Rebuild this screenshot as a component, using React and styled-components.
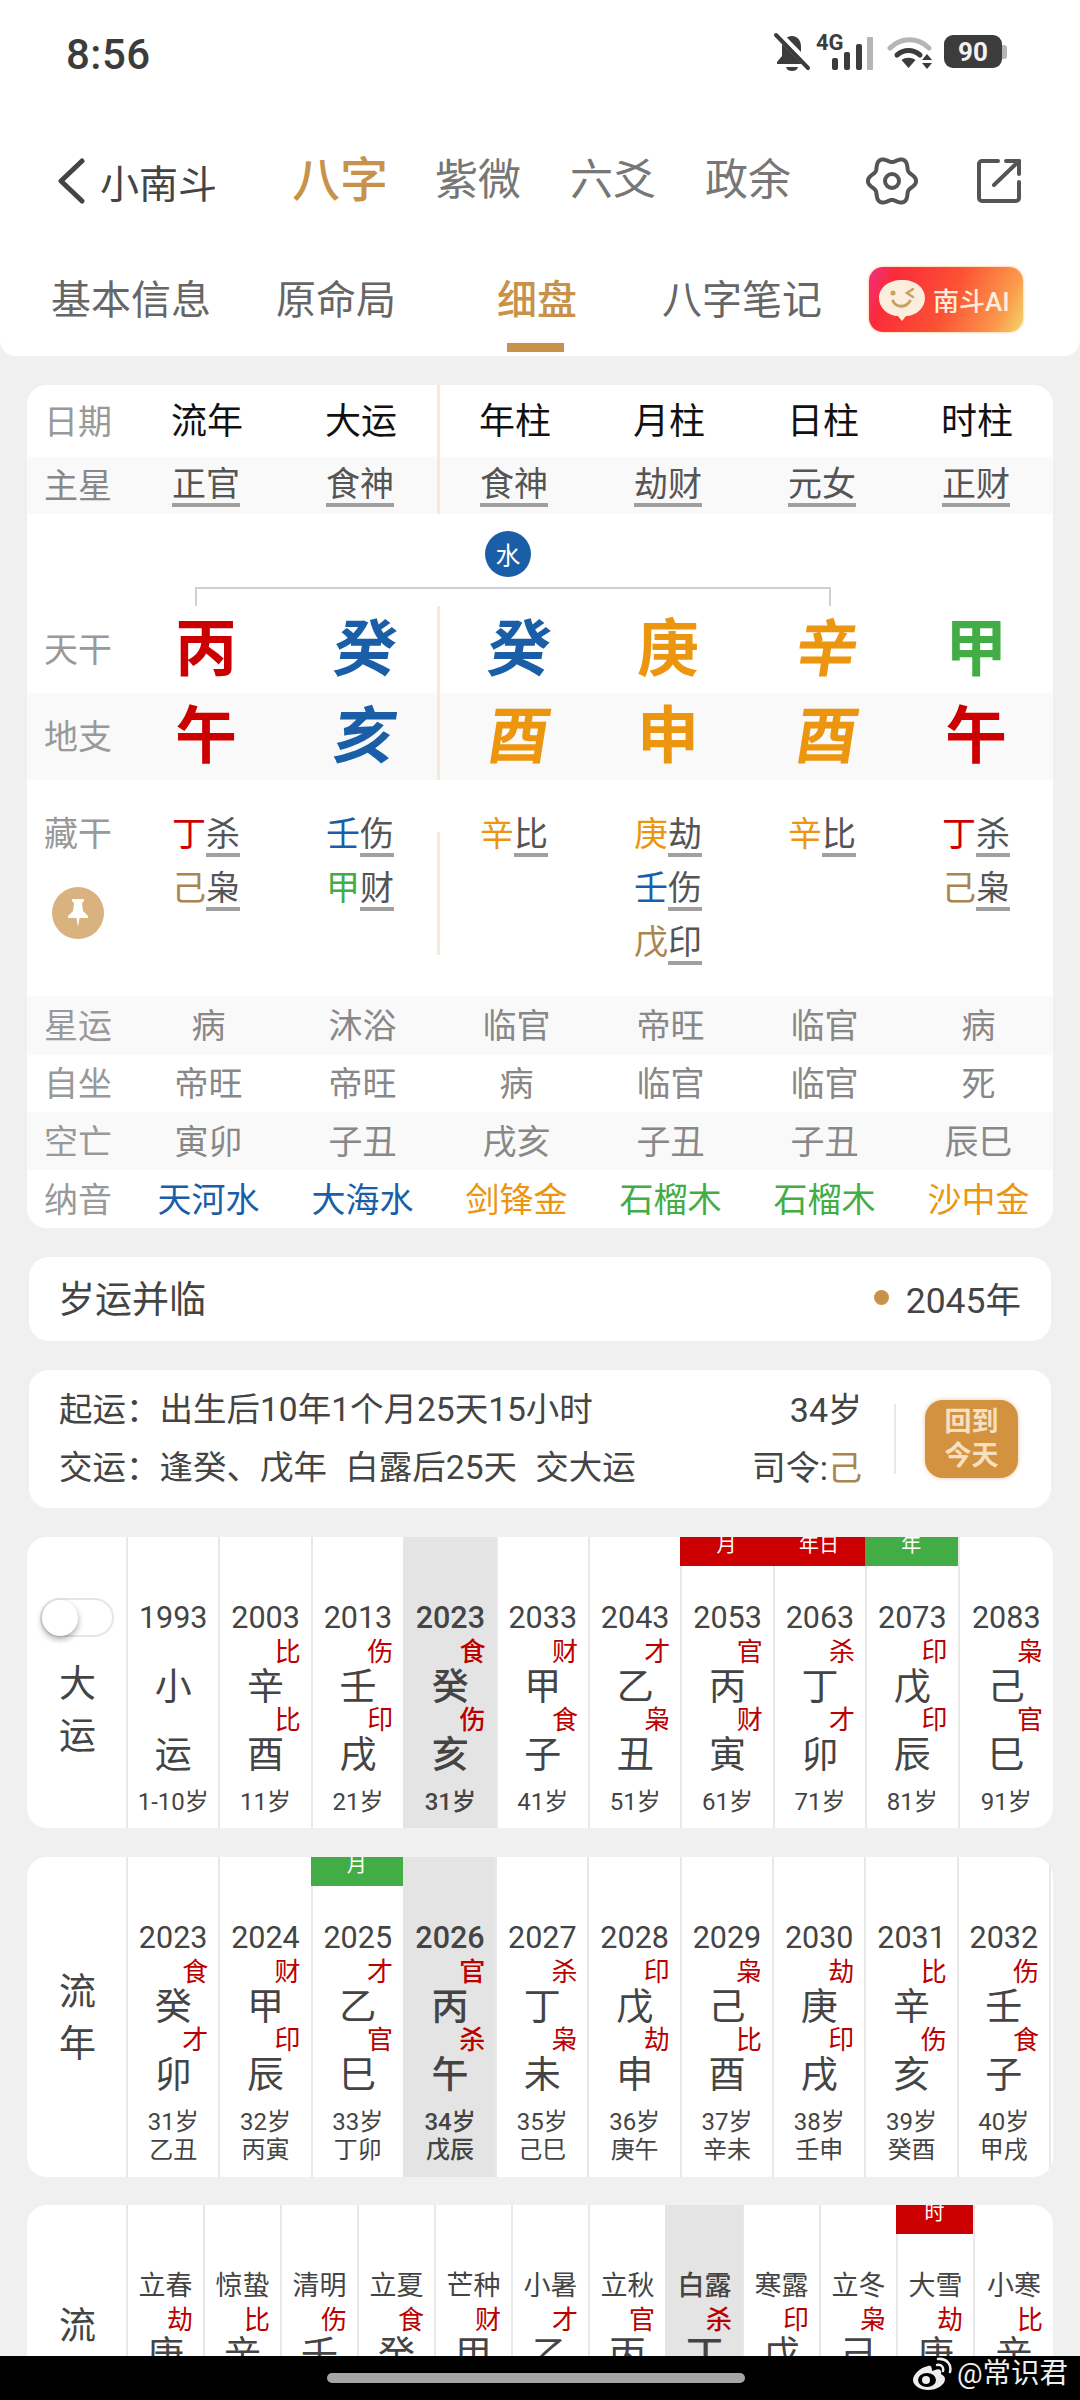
import React from 'react';
import styled, { createGlobalStyle } from 'styled-components';

const GlobalStyle = createGlobalStyle`
  html, body {
    margin: 0;
    padding: 0;
    background: #f0f0f0;
  }
  * {
    box-sizing: border-box;
  }
`

const RED = '#cc0000'
const BLUE = '#1a5ea8'
const ORANGE = '#ec960f'
const GREEN = '#43ad45'
const EARTH = '#a9854f'
const GOLD = '#c8924b'

const Page = styled.div`
  width: 1080px;
  height: 2400px;
  display: flex;
  flex-direction: column;
  overflow: hidden;
  font-family: Roboto, "Noto Sans CJK SC", sans-serif;
  background: #f0f0f0;
`

const Scroll = styled.div`
  height: 2356px;
  overflow: hidden;
  flex: none;
`

const Header = styled.div`
  height: 356px;
  background: #fff;
  border-radius: 0 0 16px 16px;
  display: flex;
  flex-direction: column;
`

const StatusBar = styled.div`
  height: 110px;
  flex: none;
  display: flex;
  align-items: center;
  justify-content: space-between;
  padding: 0 73px 2px 66px;
  color: #3c3c3c;
`

const Time = styled.div`
  font-size: 42px;
  font-weight: 500;
  letter-spacing: 0.5px;
`

const StatusIcons = styled.div`
  display: flex;
  align-items: center;
  margin-bottom: 5px;
`

const Battery = styled.div`
  width: 58px;
  height: 33px;
  margin-left: 11px;
  border-radius: 9px;
  background: #3c3c3c;
  color: #f2f2f2;
  font-size: 26px;
  font-weight: 700;
  display: flex;
  align-items: center;
  justify-content: center;
`

const BatteryCap = styled.div`
  width: 5px;
  height: 14px;
  background: #b5b5b5;
  border-radius: 0 3px 3px 0;
`

const NavRow = styled.div`
  height: 72px;
  flex: none;
  margin-top: 35px;
  display: flex;
  align-items: center;
  padding-left: 56px;
`

const BackLabel = styled.div`
  font-size: 39px;
  color: #444;
  margin-left: 14px;
  width: 192px;
`

const NavItem = styled.div`
  font-size: ${p => (p.$active ? 48 : 43)}px;
  color: ${p => (p.$active ? GOLD : '#777')};
  font-weight: ${p => (p.$active ? 500 : 400)};
  margin-right: ${p => (p.$active ? 47 : 49)}px;
  line-height: 1.2;
`

const NavIcons = styled.div`
  display: flex;
  align-items: center;
  margin-left: 26px;
  gap: 58px;
`

const TabRow = styled.div`
  flex: 1;
  display: flex;
  align-items: flex-start;
  padding-top: 60px;
`

const Tab = styled.div`
  font-size: 40px;
  line-height: 48px;
  color: ${p => (p.$active ? GOLD : '#666')};
  font-weight: ${p => (p.$active ? 500 : 400)};
  margin-left: ${p => p.$left}px;
  position: relative;
  flex: none;
`

const TabBar = styled.div`
  position: absolute;
  left: 10px;
  top: 66px;
  width: 57px;
  height: 9px;
  background: ${GOLD};
`

const AiBadge = styled.div`
  margin-left: 47px;
  margin-top: -10px;
  width: 154px;
  height: 65px;
  border-radius: 14px;
  background: linear-gradient(115deg, #ee2f86 0%, #fb2b3a 16%, #fb5234 52%, #fb9a4c 84%, #f3d768 100%);
  box-shadow: 0 0 2px 1px #ffdcb4;
  display: flex;
  align-items: center;
  padding-left: 9px;
  color: #ffeede;
  font-size: 26px;
  font-weight: 500;
  flex: none;
`

const AiFace = styled.svg`
  margin-right: 7px;
  flex: none;
`

const Card = styled.div`
  margin: ${p => p.$top}px 27px 0;
  background: #fff;
  border-radius: 20px;
  overflow: hidden;
`

const Row = styled.div`
  display: grid;
  grid-template-columns: 102px repeat(6, 154px);
  grid-auto-rows: ${p => p.$h}px;
  height: ${p => p.$h}px;
  background: ${p => (p.$shade ? '#f9f9f9' : '#fff')};
`

const Cell = styled.div`
  display: flex;
  align-items: center;
  justify-content: center;
  font-size: ${p => p.$size || 34}px;
  line-height: 1.2;
  color: ${p => p.$color || '#777'};
  font-weight: ${p => p.$weight || 400};
  padding-top: ${p => p.$drop || 0}px;
  padding-left: ${p => p.$nudge || 0}px;
  ${p => (p.$divide ? 'border-left: 3px solid #f6e8da; padding-right: 3px;' : '')}
`

const Label = styled(Cell)`
  color: ${p => p.$color || '#999'};
  justify-content: flex-start;
  padding-left: 17px;
  padding-top: 2px;
`

const Star = styled.span`
  color: #555;
  border-bottom: 4px solid #a0a0a0;
  line-height: 38px;
  display: inline-block;
`

const BigChar = styled.span`
  display: inline-block;
  ${p => (p.$skew ? 'transform: translateX(5px) skewX(-9deg);' : '')}
`

const WaterArea = styled.div`
  height: 92px;
  display: flex;
  flex-direction: column;
  align-items: center;
  padding-top: 17px;
`

const WaterDot = styled.div`
  width: 46px;
  height: 46px;
  flex: none;
  border-radius: 50%;
  background: ${BLUE};
  color: #fff;
  font-size: 25px;
  display: flex;
  align-items: center;
  justify-content: center;
  margin-right: 64px;
`

const Bracket = styled.div`
  width: 636px;
  height: 19px;
  flex: none;
  margin-top: 10px;
  margin-right: 55px;
  border: 2px solid #cfcfcf;
  border-bottom: none;
`

const HiddenBlock = styled.div`
  display: grid;
  grid-template-columns: 102px repeat(6, 154px);
  height: 216px;
  padding-top: 35px;
  position: relative;
`

const HiddenLabel = styled.div`
  display: flex;
  flex-direction: column;
  align-items: flex-start;
  padding-left: 17px;
  font-size: 34px;
  line-height: 46px;
  margin-top: -4px;
  color: #999;
`

const PinDot = styled.div`
  width: 52px;
  height: 52px;
  margin: 30px 0 0 8px;
  border-radius: 50%;
  background: #dab27f;
  display: flex;
  align-items: center;
  justify-content: center;
`

const HiddenCol = styled.div`
  display: flex;
  flex-direction: column;
  align-items: center;
  gap: 12px;
  font-size: 34px;
  line-height: 38px;
`

const HiddenItem = styled.div`
  display: flex;
`

const StemTone = styled.span`
  color: ${p => p.$color};
`

const ColDivider = styled.div`
  position: absolute;
  left: 410px;
  top: 52px;
  width: 3px;
  height: 123px;
  background: #f6e8da;
`

const BarCard = styled(Card)`
  height: 84px;
  margin-left: 29px;
  margin-right: 29px;
  padding: 0 30px 4px 29px;
  display: flex;
  align-items: center;
  justify-content: space-between;
  font-size: 37px;
  color: #444;
`

const YearMark = styled.div`
  display: flex;
  align-items: center;
  font-size: 35.5px;
`

const Dot = styled.span`
  width: 15px;
  height: 15px;
  border-radius: 50%;
  background: ${GOLD};
  margin-right: 17px;
`

const InfoCard = styled(Card)`
  height: 138px;
  margin-left: 29px;
  margin-right: 29px;
  display: flex;
  align-items: center;
  padding: 0 33px 0 30px;
  color: #444;
  font-size: 33.5px;
`

const InfoText = styled.div`
  flex: 1;
  display: flex;
  flex-direction: column;
  gap: 14px;
  line-height: 44px;
`

const InfoLine = styled.div`
  white-space: pre;
  word-spacing: 10px;
`

const InfoRight = styled.div`
  display: flex;
  flex-direction: column;
  align-items: flex-end;
  gap: 14px;
  line-height: 44px;
  font-size: 34px;
`

const InfoDivider = styled.div`
  width: 2px;
  height: 70px;
  margin-left: 32px;
  background: #e8e8e8;
`

const TodayButton = styled.div`
  width: 93px;
  height: 78px;
  margin-left: 29px;
  border-radius: 18px;
  background: #d39240;
  box-shadow: 0 0 4px rgba(200, 146, 75, 0.5);
  color: #f7e0bf;
  font-size: 27px;
  line-height: 34px;
  font-weight: 700;
  text-align: center;
  padding-top: 5px;
`

const Table = styled(Card)`
  height: ${p => p.$h}px;
  display: grid;
  grid-template-columns: 99px 1fr;
`

const SideCol = styled.div`
  position: relative;
  display: flex;
  flex-direction: column;
  align-items: center;
  justify-content: center;
  font-size: 37px;
  line-height: 52px;
  color: #444;
  padding-left: 2px;
  padding-top: ${p => p.$low || 4}px;
`

const ClipLabel = styled(SideCol)`
  justify-content: flex-start;
  padding-top: 96px;
`

const Toggle = styled.div`
  width: 74px;
  height: 39px;
  border-radius: 20px;
  border: 2px solid #e6e6e6;
  position: absolute;
  left: 13px;
  top: 61px;
`

const Knob = styled.div`
  width: 36px;
  height: 36px;
  border-radius: 50%;
  background: #fff;
  box-shadow: 0 3px 6px rgba(0, 0, 0, 0.35);
`

const Columns = styled.div`
  display: grid;
  grid-template-columns: repeat(${p => p.$count}, ${p => p.$width}px) 1fr;
`

const Col = styled.div`
  border-left: 2px solid #e8e8e8;
  background: ${p => (p.$now ? '#e4e4e4' : 'transparent')};
  ${p => (p.$now ? 'border-left-color: #e4e4e4;' : '')}
  display: flex;
  flex-direction: column;
  align-items: center;
  color: #444;
  font-weight: ${p => (p.$now ? 500 : 400)};
  position: relative;
`

const Tag = styled.div`
  width: calc(100% + 2px);
  margin-left: -2px;
  height: 29px;
  background: ${p => p.$color || 'transparent'};
  color: #fff;
  font-size: 20px;
  line-height: 16px;
  text-align: center;
  flex: none;
`

const Year = styled.div`
  font-size: ${p => p.$size}px;
  line-height: 40px;
  height: 40px;
  margin-top: 32px;
  white-space: nowrap;
  flex: none;
`

const Pair = styled.div`
  width: 100%;
  height: 68px;
  display: flex;
  flex-direction: column;
  align-items: center;
  position: relative;
  flex: none;
  padding-top: 28px;
`

const GodMark = styled.span`
  position: absolute;
  top: 0;
  right: 10px;
  font-size: 26px;
  line-height: 28px;
  color: #bb0000;
`

const Stem = styled.span`
  font-size: 37px;
  line-height: 44px;
`

const Age = styled.div`
  font-size: 24px;
  line-height: 29px;
  margin-top: ${p => p.$gap}px;
  white-space: nowrap;
`

const BottomBar = styled.div`
  flex: 1;
  background: #000;
  position: relative;
  display: flex;
  justify-content: center;
  padding-top: 17px;
  padding-right: 8px;
`

const HomePill = styled.div`
  width: 418px;
  height: 10px;
  border-radius: 5px;
  background: #a5a5a5;
`

const Watermark = styled.div`
  position: absolute;
  right: 12px;
  top: -1px;
  display: flex;
  align-items: center;
  gap: 5px;
  color: #eee;
  font-size: 28.5px;
  line-height: 38px;
`

const pillars = [
  { date: '流年', star: '正官', stem: '丙', stemColor: RED, branch: '午', branchColor: RED },
  { date: '大运', star: '食神', stem: '癸', stemColor: BLUE, skewStem: true, branch: '亥', branchColor: BLUE, skewBranch: true },
  { date: '年柱', star: '食神', stem: '癸', stemColor: BLUE, skewStem: true, branch: '酉', branchColor: ORANGE, skewBranch: true },
  { date: '月柱', star: '劫财', stem: '庚', stemColor: ORANGE, branch: '申', branchColor: ORANGE },
  { date: '日柱', star: '元女', stem: '辛', stemColor: ORANGE, skewStem: true, branch: '酉', branchColor: ORANGE, skewBranch: true },
  { date: '时柱', star: '正财', stem: '甲', stemColor: GREEN, branch: '午', branchColor: RED },
]

const hidden = [
  [['丁', RED, '杀'], ['己', EARTH, '枭']],
  [['壬', BLUE, '伤'], ['甲', GREEN, '财']],
  [['辛', ORANGE, '比']],
  [['庚', ORANGE, '劫'], ['壬', BLUE, '伤'], ['戊', EARTH, '印']],
  [['辛', ORANGE, '比']],
  [['丁', RED, '杀'], ['己', EARTH, '枭']],
]

const plainRows = [
  { label: '星运', values: ['病', '沐浴', '临官', '帝旺', '临官', '病'], shade: true, h: 59 },
  { label: '自坐', values: ['帝旺', '帝旺', '病', '临官', '临官', '死'], h: 57 },
  { label: '空亡', values: ['寅卯', '子丑', '戌亥', '子丑', '子丑', '辰巳'], shade: true, h: 58 },
]

const nayin = [
  ['天河水', BLUE], ['大海水', BLUE], ['剑锋金', ORANGE],
  ['石榴木', GREEN], ['石榴木', GREEN], ['沙中金', ORANGE],
]

const dayun = [
  { year: '1993', god1: '', stem: '小', god2: '', branch: '运', age: '1-10岁' },
  { year: '2003', god1: '比', stem: '辛', god2: '比', branch: '酉', age: '11岁' },
  { year: '2013', god1: '伤', stem: '壬', god2: '印', branch: '戌', age: '21岁' },
  { year: '2023', god1: '食', stem: '癸', god2: '伤', branch: '亥', age: '31岁', now: true },
  { year: '2033', god1: '财', stem: '甲', god2: '食', branch: '子', age: '41岁' },
  { year: '2043', god1: '才', stem: '乙', god2: '枭', branch: '丑', age: '51岁' },
  { year: '2053', god1: '官', stem: '丙', god2: '财', branch: '寅', age: '61岁', tag: '月', tagColor: RED },
  { year: '2063', god1: '杀', stem: '丁', god2: '才', branch: '卯', age: '71岁', tag: '年日', tagColor: RED },
  { year: '2073', god1: '印', stem: '戊', god2: '印', branch: '辰', age: '81岁', tag: '年', tagColor: GREEN },
  { year: '2083', god1: '枭', stem: '己', god2: '官', branch: '巳', age: '91岁' },
]

const liunian = [
  { year: '2023', god1: '食', stem: '癸', god2: '才', branch: '卯', age: '31岁', gz: '乙丑' },
  { year: '2024', god1: '财', stem: '甲', god2: '印', branch: '辰', age: '32岁', gz: '丙寅' },
  { year: '2025', god1: '才', stem: '乙', god2: '官', branch: '巳', age: '33岁', gz: '丁卯', tag: '月', tagColor: GREEN },
  { year: '2026', god1: '官', stem: '丙', god2: '杀', branch: '午', age: '34岁', gz: '戊辰', now: true },
  { year: '2027', god1: '杀', stem: '丁', god2: '枭', branch: '未', age: '35岁', gz: '己巳' },
  { year: '2028', god1: '印', stem: '戊', god2: '劫', branch: '申', age: '36岁', gz: '庚午' },
  { year: '2029', god1: '枭', stem: '己', god2: '比', branch: '酉', age: '37岁', gz: '辛未' },
  { year: '2030', god1: '劫', stem: '庚', god2: '印', branch: '戌', age: '38岁', gz: '壬申' },
  { year: '2031', god1: '比', stem: '辛', god2: '伤', branch: '亥', age: '39岁', gz: '癸酉' },
  { year: '2032', god1: '伤', stem: '壬', god2: '食', branch: '子', age: '40岁', gz: '甲戌' },
  {},
]

const liuyue = [
  { year: '立春', god1: '劫', stem: '庚' },
  { year: '惊蛰', god1: '比', stem: '辛' },
  { year: '清明', god1: '伤', stem: '壬' },
  { year: '立夏', god1: '食', stem: '癸' },
  { year: '芒种', god1: '财', stem: '甲' },
  { year: '小暑', god1: '才', stem: '乙' },
  { year: '立秋', god1: '官', stem: '丙' },
  { year: '白露', god1: '杀', stem: '丁', now: true },
  { year: '寒露', god1: '印', stem: '戊' },
  { year: '立冬', god1: '枭', stem: '己' },
  { year: '大雪', god1: '劫', stem: '庚', tag: '时', tagColor: RED },
  { year: '小寒', god1: '比', stem: '辛' },
]

// six lobed outline of the settings gear
const gearPath = () => {
  const pts = []
  for (let a = 0; a < 360; a += 4) {
    const t = (a * Math.PI) / 180
    const r = 21.5 * (1 + 0.12 * Math.cos(6 * t))
    pts.push(`${(26 + r * Math.cos(t)).toFixed(1)} ${(25 + r * Math.sin(t)).toFixed(1)}`)
  }
  return `M${pts.join('L')}Z`
}

const BellOff = () => (
  <svg width="38" height="40" viewBox="0 0 38 40" fill="#3c3c3c">
    <path d="M19 4c-6 0-10 5-10 11v9l-5 6v2h29v-2l-5-6v-9c0-6-3-11-9-11z" />
    <path d="M13 35h12c-1 3-3 4-6 4s-5-1-6-4z" />
    <path d="M4 1l33 34" stroke="#fff" strokeWidth="8" />
    <path d="M3 3l32 33" stroke="#3c3c3c" strokeWidth="4" strokeLinecap="round" />
  </svg>
)

const Signal = () => (
  <svg width="58" height="38" viewBox="0 0 58 38" style={{ marginLeft: 5 }}>
    <text x="0" y="17" fontSize="22" fontWeight="700" fill="#3c3c3c" fontFamily="Roboto">4G</text>
    <rect x="16" y="25" width="6" height="12" rx="2" fill="#3c3c3c" />
    <rect x="28" y="19" width="6" height="18" rx="2" fill="#3c3c3c" />
    <rect x="40" y="11" width="6" height="26" rx="2" fill="#3c3c3c" />
    <rect x="51" y="4" width="6" height="33" rx="1" fill="#b5b5b5" />
  </svg>
)

const Wifi = () => (
  <svg width="46" height="34" viewBox="0 0 46 34" fill="none" style={{ marginLeft: 13 }}>
    <path d="M3 13c11-11 28-11 39 0" stroke="#b5b5b5" strokeWidth="5" strokeLinecap="round" />
    <path d="M10 20c7-6 16-6 23 0" stroke="#3c3c3c" strokeWidth="5" strokeLinecap="round" />
    <path d="M21.500 33l-7-8c4-3 10-3 14 0z" fill="#3c3c3c" />
    <path d="M40 19l5 6H35z" fill="#3c3c3c" />
    <path d="M40 34l5-6H35z" fill="#3c3c3c" />
  </svg>
)

const Back = () => (
  <svg width="30" height="46" viewBox="0 0 30 46" fill="none">
    <path d="M26 3L5 23l21 20" stroke="#444" strokeWidth="5" strokeLinecap="round" strokeLinejoin="round" />
  </svg>
)

const Gear = () => (
  <svg width="52" height="50" viewBox="0 0 52 50" fill="none" stroke="#555" strokeWidth="4" strokeLinejoin="round">
    <path d={gearPath()} />
    <circle cx="26" cy="25" r="7" />
  </svg>
)

const ShareOut = () => (
  <svg width="46" height="46" viewBox="0 0 46 46" fill="none" stroke="#555" strokeWidth="4" strokeLinecap="round" strokeLinejoin="round">
    <path d="M22 3H6a3 3 0 0 0-3 3v34a3 3 0 0 0 3 3h34a3 3 0 0 0 3-3V24" />
    <path d="M18 27L43 3" />
    <path d="M30 3h13v13" />
  </svg>
)

const Face = () => (
  <AiFace width="48" height="42" viewBox="0 0 48 42">
    <path d="M24 1c14 0 23 8 23 18S38 37 28 37l-4 5-4-5C10 37 1 29 1 19S10 1 24 1z" fill="#fbeedd" />
    <circle cx="15" cy="14" r="2.5" fill="#c9a060" />
    <path d="M35 10l-6 4 6 4" stroke="#c9a060" strokeWidth="2.500" fill="none" strokeLinecap="round" />
    <path d="M15 22c3 7 13 7 17 0" stroke="#c9a060" strokeWidth="3" fill="none" strokeLinecap="round" />
  </AiFace>
)

const Pin = () => (
  <svg width="22" height="30" viewBox="0 0 22 30" fill="#fff">
    <path d="M5 1h12v2l-2 2 1 8 5 5v2H1v-2l5-5 1-8-2-2z" />
    <path d="M9.500 20h3L11 29z" />
  </svg>
)

const Weibo = () => (
  <svg width="40" height="34" viewBox="0 0 40 34" fill="none">
    <path d="M16 9C7 11 1 18 1 23c0 6 8 10 15 10 9 0 17-5 17-11 0-3-3-4-4-5 1-3-1-6-6-4l-3 1c0-4-1-6-4-5z" fill="#eee" />
    <ellipse cx="15" cy="23" rx="9" ry="7" fill="#000" />
    <circle cx="14" cy="23" r="4" fill="#eee" />
    <path d="M25 8c4-1 7 2 6 6M26 2c8-1 14 5 12 13" stroke="#eee" strokeWidth="2.500" strokeLinecap="round" />
  </svg>
)

const TimeColumn = ({ item, yearSize }) => (
  <Col $now={item.now}>
    <Tag $color={item.tagColor}>{item.tag}</Tag>
    <Year $size={yearSize}>{item.year}</Year>
    <Pair>
      {item.god1 && <GodMark>{item.god1}</GodMark>}
      <Stem>{item.stem}</Stem>
    </Pair>
    <Pair>
      {item.god2 && <GodMark>{item.god2}</GodMark>}
      <Stem>{item.branch}</Stem>
    </Pair>
    {item.age && <Age $gap={14}>{item.age}</Age>}
    {item.gz && <Age $gap={-1}>{item.gz}</Age>}
  </Col>
)

export default function App() {
  return (
    <Page>
      <GlobalStyle />
      <Scroll>
        <Header>
          <StatusBar>
            <Time>8:56</Time>
            <StatusIcons>
              <BellOff />
              <Signal />
              <Wifi />
              <Battery>90</Battery>
              <BatteryCap />
            </StatusIcons>
          </StatusBar>
          <NavRow>
            <Back />
            <BackLabel>小南斗</BackLabel>
            <NavItem $active>八字</NavItem>
            <NavItem>紫微</NavItem>
            <NavItem>六爻</NavItem>
            <NavItem>政余</NavItem>
            <NavIcons>
              <Gear />
              <ShareOut />
            </NavIcons>
          </NavRow>
          <TabRow>
            <Tab $left={51}>基本信息</Tab>
            <Tab $left={65}>原命局</Tab>
            <Tab $left={101} $active>细盘<TabBar /></Tab>
            <Tab $left={85}>八字笔记</Tab>
            <AiBadge><Face />南斗AI</AiBadge>
          </TabRow>
        </Header>

        <Card $top={29}>
          <Row $h={72}>
            <Label>日期</Label>
            {pillars.map((p, i) => (
              <Cell key={i} $size={36} $drop={3} $nudge={2} $color="#111" $divide={i === 2}>{p.date}</Cell>
            ))}
          </Row>
          <Row $h={57} $shade>
            <Label $color="#888">主星</Label>
            {pillars.map((p, i) => (
              <Cell key={i} $divide={i === 2}><Star>{p.star}</Star></Cell>
            ))}
          </Row>
          <WaterArea>
            <WaterDot>水</WaterDot>
            <Bracket />
          </WaterArea>
          <Row $h={87}>
            <Label>天干</Label>
            {pillars.map((p, i) => (
              <Cell key={i} $size={62} $weight={700} $drop={2} $color={p.stemColor} $divide={i === 2}>
                <BigChar $skew={p.skewStem}>{p.stem}</BigChar>
              </Cell>
            ))}
          </Row>
          <Row $h={87} $shade>
            <Label>地支</Label>
            {pillars.map((p, i) => (
              <Cell key={i} $size={62} $weight={700} $drop={2} $color={p.branchColor} $divide={i === 2}>
                <BigChar $skew={p.skewBranch}>{p.branch}</BigChar>
              </Cell>
            ))}
          </Row>
          <HiddenBlock>
            <HiddenLabel>
              藏干
              <PinDot><Pin /></PinDot>
            </HiddenLabel>
            {hidden.map((col, i) => (
              <HiddenCol key={i}>
                {col.map(([stem, color, god]) => (
                  <HiddenItem key={stem}>
                    <StemTone $color={color}>{stem}</StemTone>
                    <Star>{god}</Star>
                  </HiddenItem>
                ))}
              </HiddenCol>
            ))}
            <ColDivider />
          </HiddenBlock>
          {plainRows.map(row => (
            <Row key={row.label} $h={row.h} $shade={row.shade}>
              <Label>{row.label}</Label>
              {row.values.map((v, i) => (
                <Cell key={i} $drop={2} $nudge={5} $color="#888">{v}</Cell>
              ))}
            </Row>
          ))}
          <Row $h={58}>
            <Label>纳音</Label>
            {nayin.map(([text, color], i) => (
              <Cell key={i} $drop={2} $nudge={5} $color={color}>{text}</Cell>
            ))}
          </Row>
        </Card>

        <BarCard $top={29}>
          岁运并临
          <YearMark><Dot />2045年</YearMark>
        </BarCard>

        <InfoCard $top={29}>
          <InfoText>
            <InfoLine>起运：出生后10年1个月25天15小时</InfoLine>
            <InfoLine>交运：逢癸、戊年 白露后25天 交大运</InfoLine>
          </InfoText>
          <InfoRight>
            <div>34岁</div>
            <div>司令:<StemTone $color={EARTH}>己</StemTone></div>
          </InfoRight>
          <InfoDivider />
          <TodayButton>回到<br />今天</TodayButton>
        </InfoCard>

        <Table $top={29} $h={291}>
          <SideCol $low={56}>
            <Toggle><Knob /></Toggle>
            <div>大</div>
            <div>运</div>
          </SideCol>
          <Columns $count={9} $width={92.4}>
            {dayun.map((item, i) => <TimeColumn key={i} item={item} yearSize={30.5} />)}
          </Columns>
        </Table>

        <Table $top={29} $h={320}>
          <SideCol>
            <div>流</div>
            <div>年</div>
          </SideCol>
          <Columns $count={10} $width={92.3}>
            {liunian.map((item, i) => <TimeColumn key={i} item={item} yearSize={30.5} />)}
          </Columns>
        </Table>

        <Table $top={28} $h={320}>
          <ClipLabel>
            <div>流</div>
            <div>月</div>
          </ClipLabel>
          <Columns $count={11} $width={77}>
            {liuyue.map((item, i) => <TimeColumn key={i} item={item} yearSize={27} />)}
          </Columns>
        </Table>
      </Scroll>
      <BottomBar>
        <HomePill />
        <Watermark><Weibo />@常识君</Watermark>
      </BottomBar>
    </Page>
  )
}
